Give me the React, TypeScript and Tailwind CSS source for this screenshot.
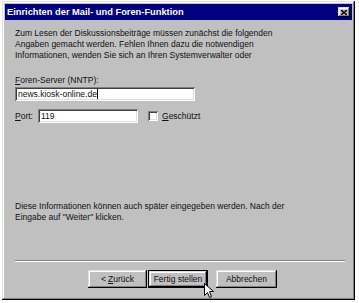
import React from 'react';

const raised =
  'shadow-[inset_-1px_-1px_#000,inset_1px_1px_#dfdfdf,inset_-2px_-2px_#808080,inset_2px_2px_#fff]';
const sunken =
  'shadow-[inset_1px_1px_#808080,inset_-1px_-1px_#fff,inset_2px_2px_#404040,inset_-2px_-2px_#dfdfdf]';

const Btn: React.FC<{ children: React.ReactNode; def?: boolean; w: string }> = ({ children, def, w }) => (
  <div
    className={`${w} h-[18px] flex items-center justify-center bg-[#c0c0c0] ${
      def ? 'border border-black' : ''
    } ${raised}`}
  >
    {children}
  </div>
);

const App: React.FC = () => {
  return (
    <div
      className="w-[359px] h-[303px] bg-white pl-[2px] pt-[1px] text-[#111] text-[8.5px] leading-[11px]"
      style={{ fontFamily: '"Liberation Sans", Arial, sans-serif' }}
    >
      <div className={`relative w-[353px] h-[299px] bg-[#c0c0c0] p-[3px] flex flex-col ${raised}`}>
        {/* Title bar */}
        <div className="h-[16px] bg-[#000080] flex items-center justify-between pl-[2px] pr-[2px]">
          <span className="text-white font-bold text-[9.3px]">Einrichten der Mail- und Foren-Funktion</span>
          <div className={`w-[12px] h-[10px] bg-[#c0c0c0] flex items-center justify-center ${raised}`}>
            <svg width="6" height="5" viewBox="0 0 6 5">
              <path d="M0 0L6 5M6 0L0 5" stroke="#000" strokeWidth="1.4" />
            </svg>
          </div>
        </div>

        <div className="flex flex-col pl-[10px] pr-[7px] pt-[8px]">
          <p>
            Zum Lesen der Diskussionsbeiträge müssen zunächst die folgenden
            <br />
            Angaben gemacht werden. Fehlen Ihnen dazu die notwendigen
            <br />
            Informationen, wenden Sie sich an Ihren Systemverwalter oder
          </p>

          <p className="mt-[14px]">
            <span className="underline">F</span>oren-Server (NNTP):
          </p>
          <div className={`mt-[1px] w-[180px] h-[14px] bg-white flex items-center pl-[3px] ${sunken}`}>
            news.kiosk-online.de
            <span className="inline-block w-px h-[10px] bg-black" />
          </div>

          <div className="mt-[8px] flex items-center h-[14px]">
            <span className="w-[23px]">
              <span className="underline">P</span>ort:
            </span>
            <div className={`w-[100px] h-[14px] bg-white flex items-center pl-[3px] ${sunken}`}>119</div>
            <div className={`ml-[10px] w-[10px] h-[10px] bg-white ${sunken}`} />
            <span className="ml-[4px]">
              <span className="underline">G</span>eschützt
            </span>
          </div>

          <p className="mt-[78px]">
            Diese Informationen können auch später eingegeben werden. Nach der
            <br />
            Eingabe auf "Weiter" klicken.
          </p>

          <div className="mt-[37px] h-[2px] w-[330px] border-t border-[#808080] border-b border-b-white" />

          <div className="mt-[8px] flex pl-[73px]">
            <Btn w="w-[59px]">
              &lt; <span className="underline ml-[2px]">Z</span>urück
            </Btn>
            <div className="ml-[1px]">
              <Btn w="w-[60px]" def>
                Fertig stellen
              </Btn>
            </div>
            <div className="ml-[8px]">
              <Btn w="w-[61px]">Abbrechen</Btn>
            </div>
          </div>
        </div>

        {/* Mouse pointer */}
        <svg className="absolute left-[202px] top-[282px]" width="10" height="16" viewBox="0 0 10 16">
          <path d="M0.5 0.5V12.5L3.5 9.5L5.5 14.5L7.5 13.5L5.5 8.5H9.5Z" fill="#fff" stroke="#000" strokeWidth="1" />
        </svg>
      </div>
    </div>
  );
};

export default App;
